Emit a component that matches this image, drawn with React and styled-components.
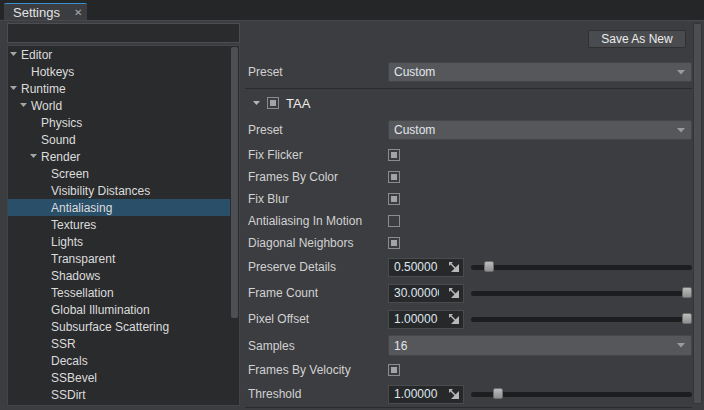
import React from 'react';
import styled, { createGlobalStyle } from 'styled-components';

const GlobalStyle = createGlobalStyle`
  html, body {
    margin: 0;
    padding: 0;
    background: #3c3d40;
  }
  body {
    font-family: "Liberation Sans", Arial, sans-serif;
    font-size: 12px;
    color: #d6d6d6;
  }
`;

const Window = styled.div`
  width: 704px;
  height: 410px;
  display: flex;
  flex-direction: column;
  overflow: hidden;
  background: #3c3d40;
`;

const TabBar = styled.div`
  height: 20px;
  flex: none;
  display: flex;
  align-items: flex-end;
  padding-left: 4px;
  background: #252628;
`;

const Tab = styled.div`
  width: 83px;
  height: 17px;
  box-sizing: border-box;
  display: flex;
  align-items: center;
  justify-content: space-between;
  padding: 0 5px 0 9px;
  background: #3c3d40;
  border-top: 1px solid #3a90d0;
  border-radius: 2px 2px 0 0;
  font-size: 13px;
  color: #e2e2e2;
`;

const Close = styled.span`
  font-size: 10px;
  color: #a8a8a8;
`;

const Body = styled.div`
  flex: 1;
  display: flex;
  border-top: 1px solid #47484b;
  min-height: 0;
`;

const LeftPanel = styled.div`
  width: 233px;
  flex: none;
  display: flex;
  flex-direction: column;
  gap: 2px;
  padding: 2px 0 4px 7px;
`;

const Search = styled.div`
  height: 20px;
  flex: none;
  box-sizing: border-box;
  background: #2a2b2d;
  border: 1px solid #4c4d50;
`;

const Tree = styled.div`
  flex: 1;
  position: relative;
  box-sizing: border-box;
  background: #2a2b2d;
  border: 1px solid #434447;
  overflow: hidden;
`;

const TreeScroll = styled.div`
  position: absolute;
  right: 1px;
  top: 1px;
  width: 7px;
  height: 271px;
  border-radius: 2px;
  background: #4e4f52;
`;

const TreeRow = styled.div`
  height: 17px;
  display: flex;
  align-items: center;
  margin-right: 9px;
  padding-left: ${p => 2 + p.level * 10}px;
  background: ${p => (p.selected ? '#2a4f68' : 'transparent')};
  color: #dcdcdc;
  white-space: nowrap;
`;

const Arrow = styled.span`
  width: 11px;
  flex: none;
  display: flex;
  align-items: center;
`;

const RightPanel = styled.div`
  flex: 1;
  display: flex;
  padding: 1px 2px 3px 5px;
  gap: 1px;
  min-width: 0;
`;

const Content = styled.div`
  flex: 1;
  display: flex;
  flex-direction: column;
  min-width: 0;
`;

const ButtonRow = styled.div`
  display: flex;
  justify-content: flex-end;
  padding: 8px 6px 0 0;
`;

const Button = styled.div`
  width: 98px;
  height: 18px;
  box-sizing: border-box;
  display: flex;
  align-items: center;
  justify-content: center;
  background: #4a4b4f;
  border: 1px solid #2f3032;
  border-radius: 2px;
  color: #ececec;
`;

const Row = styled.div`
  height: ${p => p.h || 22}px;
  display: flex;
  align-items: center;
  padding-left: 3px;
`;

const Label = styled.div`
  width: 140px;
  flex: none;
  color: #d2d2d2;
  white-space: nowrap;
`;

const Select = styled.div`
  flex: 1;
  height: ${p => p.h || 20}px;
  box-sizing: border-box;
  display: flex;
  align-items: center;
  justify-content: space-between;
  padding: 0 6px 0 5px;
  background: #56575b;
  border: 1px solid #45464a;
  border-radius: 2px;
  color: #e0e6ec;
`;

const Section = styled.div`
  display: flex;
  flex-direction: column;
  margin-top: 6px;
  border-top: 1px solid #2a2b2d;
  border-bottom: 1px solid #2a2b2d;
`;

const Header = styled.div`
  height: 22px;
  display: flex;
  align-items: center;
  gap: 7px;
  padding: 3px 0 0 8px;
  margin-bottom: 6px;
  font-size: 13px;
  color: #ececec;
`;

const Check = styled.div`
  width: 12px;
  height: 12px;
  box-sizing: border-box;
  border: 1px solid #8a8b8e;
  display: flex;
  align-items: center;
  justify-content: center;
  &::after {
    content: '';
    width: 6px;
    height: 6px;
    background: ${p => (p.on ? '#a2a3a6' : 'transparent')};
  }
`;

const NumBox = styled.div`
  width: 76px;
  height: 19px;
  flex: none;
  box-sizing: border-box;
  display: flex;
  align-items: center;
  padding: 0 4px 0 5px;
  background: #27282a;
  border: 1px solid #4a4b4e;
  color: #dfe7ef;
`;

const NumText = styled.span`
  width: 45px;
  overflow: hidden;
  white-space: nowrap;
  flex: none;
`;

const DragIcon = styled.svg`
  margin-left: auto;
  flex: none;
`;

const Slider = styled.div`
  flex: 1;
  position: relative;
  height: 12px;
  margin-left: 7px;
  display: flex;
  align-items: center;
`;

const Track = styled.div`
  width: 100%;
  height: 5px;
  border-radius: 3px;
  background: #1d1e20;
`;

const Thumb = styled.div`
  position: absolute;
  top: 0;
  width: 10px;
  height: 11px;
  border-radius: 2px;
  background: linear-gradient(#bcbcbc, #8e8e8e);
  border: 1px solid #6e6e6e;
  box-sizing: border-box;
`;

const ScrollBar = styled.div`
  width: 9px;
  flex: none;
  margin-top: 1px;
  margin-bottom: 3px;
  box-sizing: border-box;
  background: #4d4e52;
  border: 1px solid #343538;
  border-radius: 2px;
`;

const DownArrow = ({ color = '#9a9b9e', w = 8 }) => (
  <svg width={w} height={w / 2 + 1} viewBox="0 0 8 5">
    <polygon points="0,0 8,0 4,4.5" fill={color} />
  </svg>
);

const Drag = () => (
  <DragIcon width="10" height="10" viewBox="0 0 10 10">
    <polygon points="10,2 10,10 2,10" fill="#b8b8b8" />
    <line x1="0.5" y1="0.5" x2="7" y2="7" stroke="#b8b8b8" strokeWidth="1.5" />
    <polygon points="0,0 4,0 0,4" fill="#b8b8b8" />
  </DragIcon>
);

const tree = [
  { t: 'Editor', l: 0, open: true },
  { t: 'Hotkeys', l: 1 },
  { t: 'Runtime', l: 0, open: true },
  { t: 'World', l: 1, open: true },
  { t: 'Physics', l: 2 },
  { t: 'Sound', l: 2 },
  { t: 'Render', l: 2, open: true },
  { t: 'Screen', l: 3 },
  { t: 'Visibility Distances', l: 3 },
  { t: 'Antialiasing', l: 3, sel: true },
  { t: 'Textures', l: 3 },
  { t: 'Lights', l: 3 },
  { t: 'Transparent', l: 3 },
  { t: 'Shadows', l: 3 },
  { t: 'Tessellation', l: 3 },
  { t: 'Global Illumination', l: 3 },
  { t: 'Subsurface Scattering', l: 3 },
  { t: 'SSR', l: 3 },
  { t: 'Decals', l: 3 },
  { t: 'SSBevel', l: 3 },
  { t: 'SSDirt', l: 3 },
];

const NumRow = ({ label, value, pos }) => (
  <Row h={26}>
    <Label>{label}</Label>
    <NumBox>
      <NumText>{value}</NumText>
      <Drag />
    </NumBox>
    <Slider>
      <Track />
      <Thumb style={{ left: `calc(${pos} * (100% - 10px))` }} />
    </Slider>
  </Row>
);

const CheckRow = ({ label, on }) => (
  <Row>
    <Label>{label}</Label>
    <Check on={on} />
  </Row>
);

export default function App() {
  return (
    <Window>
      <GlobalStyle />
      <TabBar>
        <Tab>
          <span>Settings</span>
          <Close>✕</Close>
        </Tab>
      </TabBar>
      <Body>
        <LeftPanel>
          <Search />
          <Tree>
            {tree.map(n => (
              <TreeRow key={n.t} level={n.l} selected={n.sel}>
                <Arrow>{n.open && <DownArrow w={7} color="#a4a4a4" />}</Arrow>
                {n.t}
              </TreeRow>
            ))}
            <TreeScroll />
          </Tree>
        </LeftPanel>
        <RightPanel>
          <Content>
            <ButtonRow>
              <Button>Save As New</Button>
            </ButtonRow>
            <Row h={20} style={{ marginTop: 14 }}>
              <Label>Preset</Label>
              <Select>
                Custom
                <DownArrow />
              </Select>
            </Row>
            <Section>
              <Header>
                <DownArrow w={7} color="#b4b4b4" />
                <Check on />
                TAA
              </Header>
              <Row h={20}>
                <Label>Preset</Label>
                <Select>
                  Custom
                  <DownArrow />
                </Select>
              </Row>
              <div style={{ height: 4 }} />
              <CheckRow label="Fix Flicker" on />
              <CheckRow label="Frames By Color" on />
              <CheckRow label="Fix Blur" on />
              <CheckRow label="Antialiasing In Motion" />
              <CheckRow label="Diagonal Neighbors" on />
              <NumRow label="Preserve Details" value="0.50000" pos={0.06} />
              <NumRow label="Frame Count" value="30.000000" pos={1} />
              <NumRow label="Pixel Offset" value="1.00000" pos={1} />
              <Row h={27}>
                <Label>Samples</Label>
                <Select h={21}>
                  16
                  <DownArrow />
                </Select>
              </Row>
              <CheckRow label="Frames By Velocity" on />
              <NumRow label="Threshold" value="1.00000" pos={0.106} />
            </Section>
          </Content>
          <ScrollBar />
        </RightPanel>
      </Body>
    </Window>
  );
}
